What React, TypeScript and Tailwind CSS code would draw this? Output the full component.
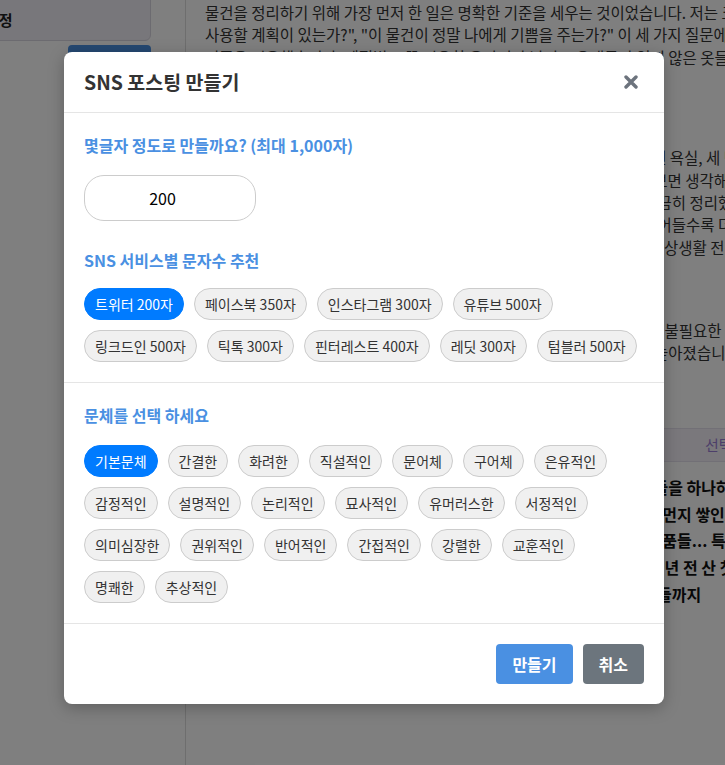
import { useState } from 'react';

const SNS_PRESETS = [
  { name: '트위터', count: 200 },
  { name: '페이스북', count: 350 },
  { name: '인스타그램', count: 300 },
  { name: '유튜브', count: 500 },
  { name: '링크드인', count: 500 },
  { name: '틱톡', count: 300 },
  { name: '핀터레스트', count: 400 },
  { name: '레딧', count: 300 },
  { name: '텀블러', count: 500 },
];

const TONES = [
  '기본문체', '간결한', '화려한', '직설적인', '문어체', '구어체', '은유적인',
  '감정적인', '설명적인', '논리적인', '묘사적인', '유머러스한', '서정적인',
  '의미심장한', '권위적인', '반어적인', '간접적인', '강렬한', '교훈적인',
  '명쾌한', '추상적인',
];

function Chip({ label, active, onClick }: { label: string; active: boolean; onClick: () => void }) {
  return (
    <button
      type="button"
      onClick={onClick}
      className={`h-8 rounded-full border px-2.5 text-sm leading-5 whitespace-nowrap ${
        active ? 'bg-[#007bff] border-[#007bff] text-white' : 'bg-[#f0f0f0] border-[#cccccc] text-[#333333]'
      }`}
    >
      {label}
    </button>
  );
}

// the document page sitting behind the modal
function BackgroundPage() {
  return (
    <div className="flex h-full">
      <aside className="w-[186px] shrink-0 border-r border-[#dddddd]">
        <div className="-ml-[59px] -mt-px flex h-[42px] w-[210px] items-center rounded-br-[6px] border border-[#d9d6e0] bg-[#f0eef6] pl-3 text-[15px] font-bold text-[#222222]">
          문체 설정
        </div>
        <button type="button" className="ml-[68px] mt-[4px] h-[36px] w-[83px] rounded bg-[#4a90e2] text-sm font-bold text-white">
          적용하기
        </button>
      </aside>

      <main className="min-w-0 flex-1 pl-[19px] pt-px text-[15.5px] leading-[22.4px] text-[#333333]">
        <div className="whitespace-nowrap">
          <div>물건을 정리하기 위해 가장 먼저 한 일은 명확한 기준을 세우는 것이었습니다. 저는 크게 세 가지 질문을 던졌습니다. "지난 1년 동안 사용했는가?", "앞으로</div>
          <div>사용할 계획이 있는가?", "이 물건이 정말 나에게 기쁨을 주는가?" 이 세 가지 질문에 모두 아니라고 답한 물건은 정리 대상이 되었습니다.</div>
          <div>기준을 적용했습니다. 계절별로 꼭 필요한 옷가지만 남기고 오래동안 입지 않은 옷들은 모두 기부했습니다.</div>
        </div>

        <h3 className="mt-[26px] text-base font-bold leading-6">공간별 정리 순서</h3>

        <div className="mt-[28px] whitespace-nowrap">
          <div>정리는 현관에서 시작해 주방, 거실, 침실, 서재 순으로 진행했고 다음 주엔 욕실, 세 번째 주에는 옷장과 서랍장을 정리했습니다.</div>
          <div>각 공간마다 물건을 모두 꺼내어서 바닥에 펼쳐 놓고 하나하나 다시 살펴보면 생각해보지 못했던 물건이 많았습니다.</div>
          <div>쓰지 않는 주방 도구와 유통 기한이 지난 식재료, 중복된 생활용품들을 깔끔히 정리했습니다.</div>
          <div>처음에는 정말 아깝다는 생각이 들었지만, 집 안의 물건이 하나둘 조금 줄어들수록 더 가벼워지는 기분이었습니다.</div>
          <div>정리를 모두 마치고 나니 청소하는 시간도 절반으로 줄었고 무엇보다도 일상생활 전반에 여유가 생겼습니다.</div>
          <div>작은 변화가 큰 차이를 만들었습니다.</div>
        </div>

        <div className="mt-[38px] whitespace-nowrap">
          <div>이제는 새로운 물건을 사기 전에 한 번 더 고민하게 되었고, 덕분에 확실히 불필요한 물건을 들이는 일이 줄었습니다.</div>
          <div>공간이 비워지니 맘도 한결 차분해졌고, 일상생활 전반에 대한 만족도도 높아졌습니다.</div>
          <div>정리는 결국 나를 돌보는 일입니다.</div>
        </div>

        <div className="mt-[42px] flex h-[34px] items-center border-y border-[#e4e0ec] bg-[#f4f1f8] pl-[500px] text-[15px] whitespace-nowrap text-[#9b7fd4]">
          선택된 문장 미리보기
        </div>

        <div className="mt-[12px] whitespace-nowrap text-[16px] font-bold leading-[26.8px] text-[#111111]">
          <div>정리하면서 가장 오래 걸린 것은 창고 깊숙한 곳에 있었던 추억의 물건들을 하나하나 꺼내 보는 일이었습니다.</div>
          <div>어릴 적 앨범과 편지, 그리고 아버지가 남기신 다락의 오래된 상자 안에 먼지 쌓인 채 잊혀 있던 장난감과</div>
          <div>잊혀 있던 장난감과 낡은 인형, 그리고 학창 시절의 여러 오래된 작은 소품들... 특히</div>
          <div>아버지께서 처음으로 선물해 주신 손목시계와 어머니가 결혼할 때 삼십 년 전 산 찻잔들</div>
          <div>그리고 책장 구석에 오래도록 꽂혀 있던 먼지 낀 손때 묻은 낡은 동화책들까지</div>
        </div>
      </main>
    </div>
  );
}

export default function App() {
  const [length, setLength] = useState('200');
  const [preset, setPreset] = useState('트위터');
  const [tone, setTone] = useState('기본문체');

  return (
    <div
      className="relative h-[765px] w-[725px] overflow-hidden bg-white"
      style={{ fontFamily: '"Noto Sans CJK KR", "Noto Sans", sans-serif' }}
    >
      <BackgroundPage />

      {/* modal backdrop */}
      <div className="absolute inset-0 bg-black/50 pl-[64px] pt-[52px]">
        <div className="w-[600px] overflow-hidden rounded-lg bg-white shadow-[0_4px_16px_rgba(0,0,0,0.25)]">
          <div className="flex h-[61px] items-center justify-between border-b border-[#e5e5e5] pl-5 pr-5">
            <h2 className="text-[19.5px] font-bold text-[#333333]">SNS 포스팅 만들기</h2>
            <button type="button" className="flex h-[26px] w-[26px] items-center justify-center">
              <svg width="14" height="14" viewBox="0 0 14 14" aria-hidden="true">
                <path d="M2 2 L12 12 M12 2 L2 12" stroke="#6c737d" strokeWidth="3.4" strokeLinecap="round" />
              </svg>
            </button>
          </div>

          <div className="border-b border-[#e5e5e5] px-5 pb-5 pt-5">
            <p className="text-base font-bold leading-6 text-[#4a90e2]">몇글자 정도로 만들까요? (최대 1,000자)</p>
            <input
              type="number"
              value={length}
              onChange={(e) => setLength(e.target.value)}
              className="mt-[18px] h-[46px] w-[172px] rounded-[20px] border border-[#cccccc] px-2 text-center text-base text-black outline-none"
            />
            <p className="mt-[27px] text-base font-bold leading-6 text-[#4a90e2]">SNS 서비스별 문자수 추천</p>
            <div className="mt-4 flex flex-wrap gap-2.5">
              {SNS_PRESETS.map((p) => (
                <Chip
                  key={p.name}
                  label={`${p.name} ${p.count}자`}
                  active={preset === p.name}
                  onClick={() => {
                    setPreset(p.name);
                    setLength(String(p.count));
                  }}
                />
              ))}
            </div>
          </div>

          <div className="border-b border-[#e5e5e5] px-5 pb-5 pt-5">
            <p className="text-base font-bold leading-6 text-[#4a90e2]">문체를 선택 하세요</p>
            <div className="mt-[18px] flex flex-wrap gap-2.5">
              {TONES.map((t) => (
                <Chip key={t} label={t} active={tone === t} onClick={() => setTone(t)} />
              ))}
            </div>
          </div>

          <div className="flex justify-end gap-2.5 p-5">
            <button type="button" className="h-10 rounded bg-[#4a90e2] px-4 text-base font-bold text-white">
              만들기
            </button>
            <button type="button" className="h-10 rounded bg-[#6c757d] px-4 text-base font-bold text-white">
              취소
            </button>
          </div>
        </div>
      </div>
    </div>
  );
}
